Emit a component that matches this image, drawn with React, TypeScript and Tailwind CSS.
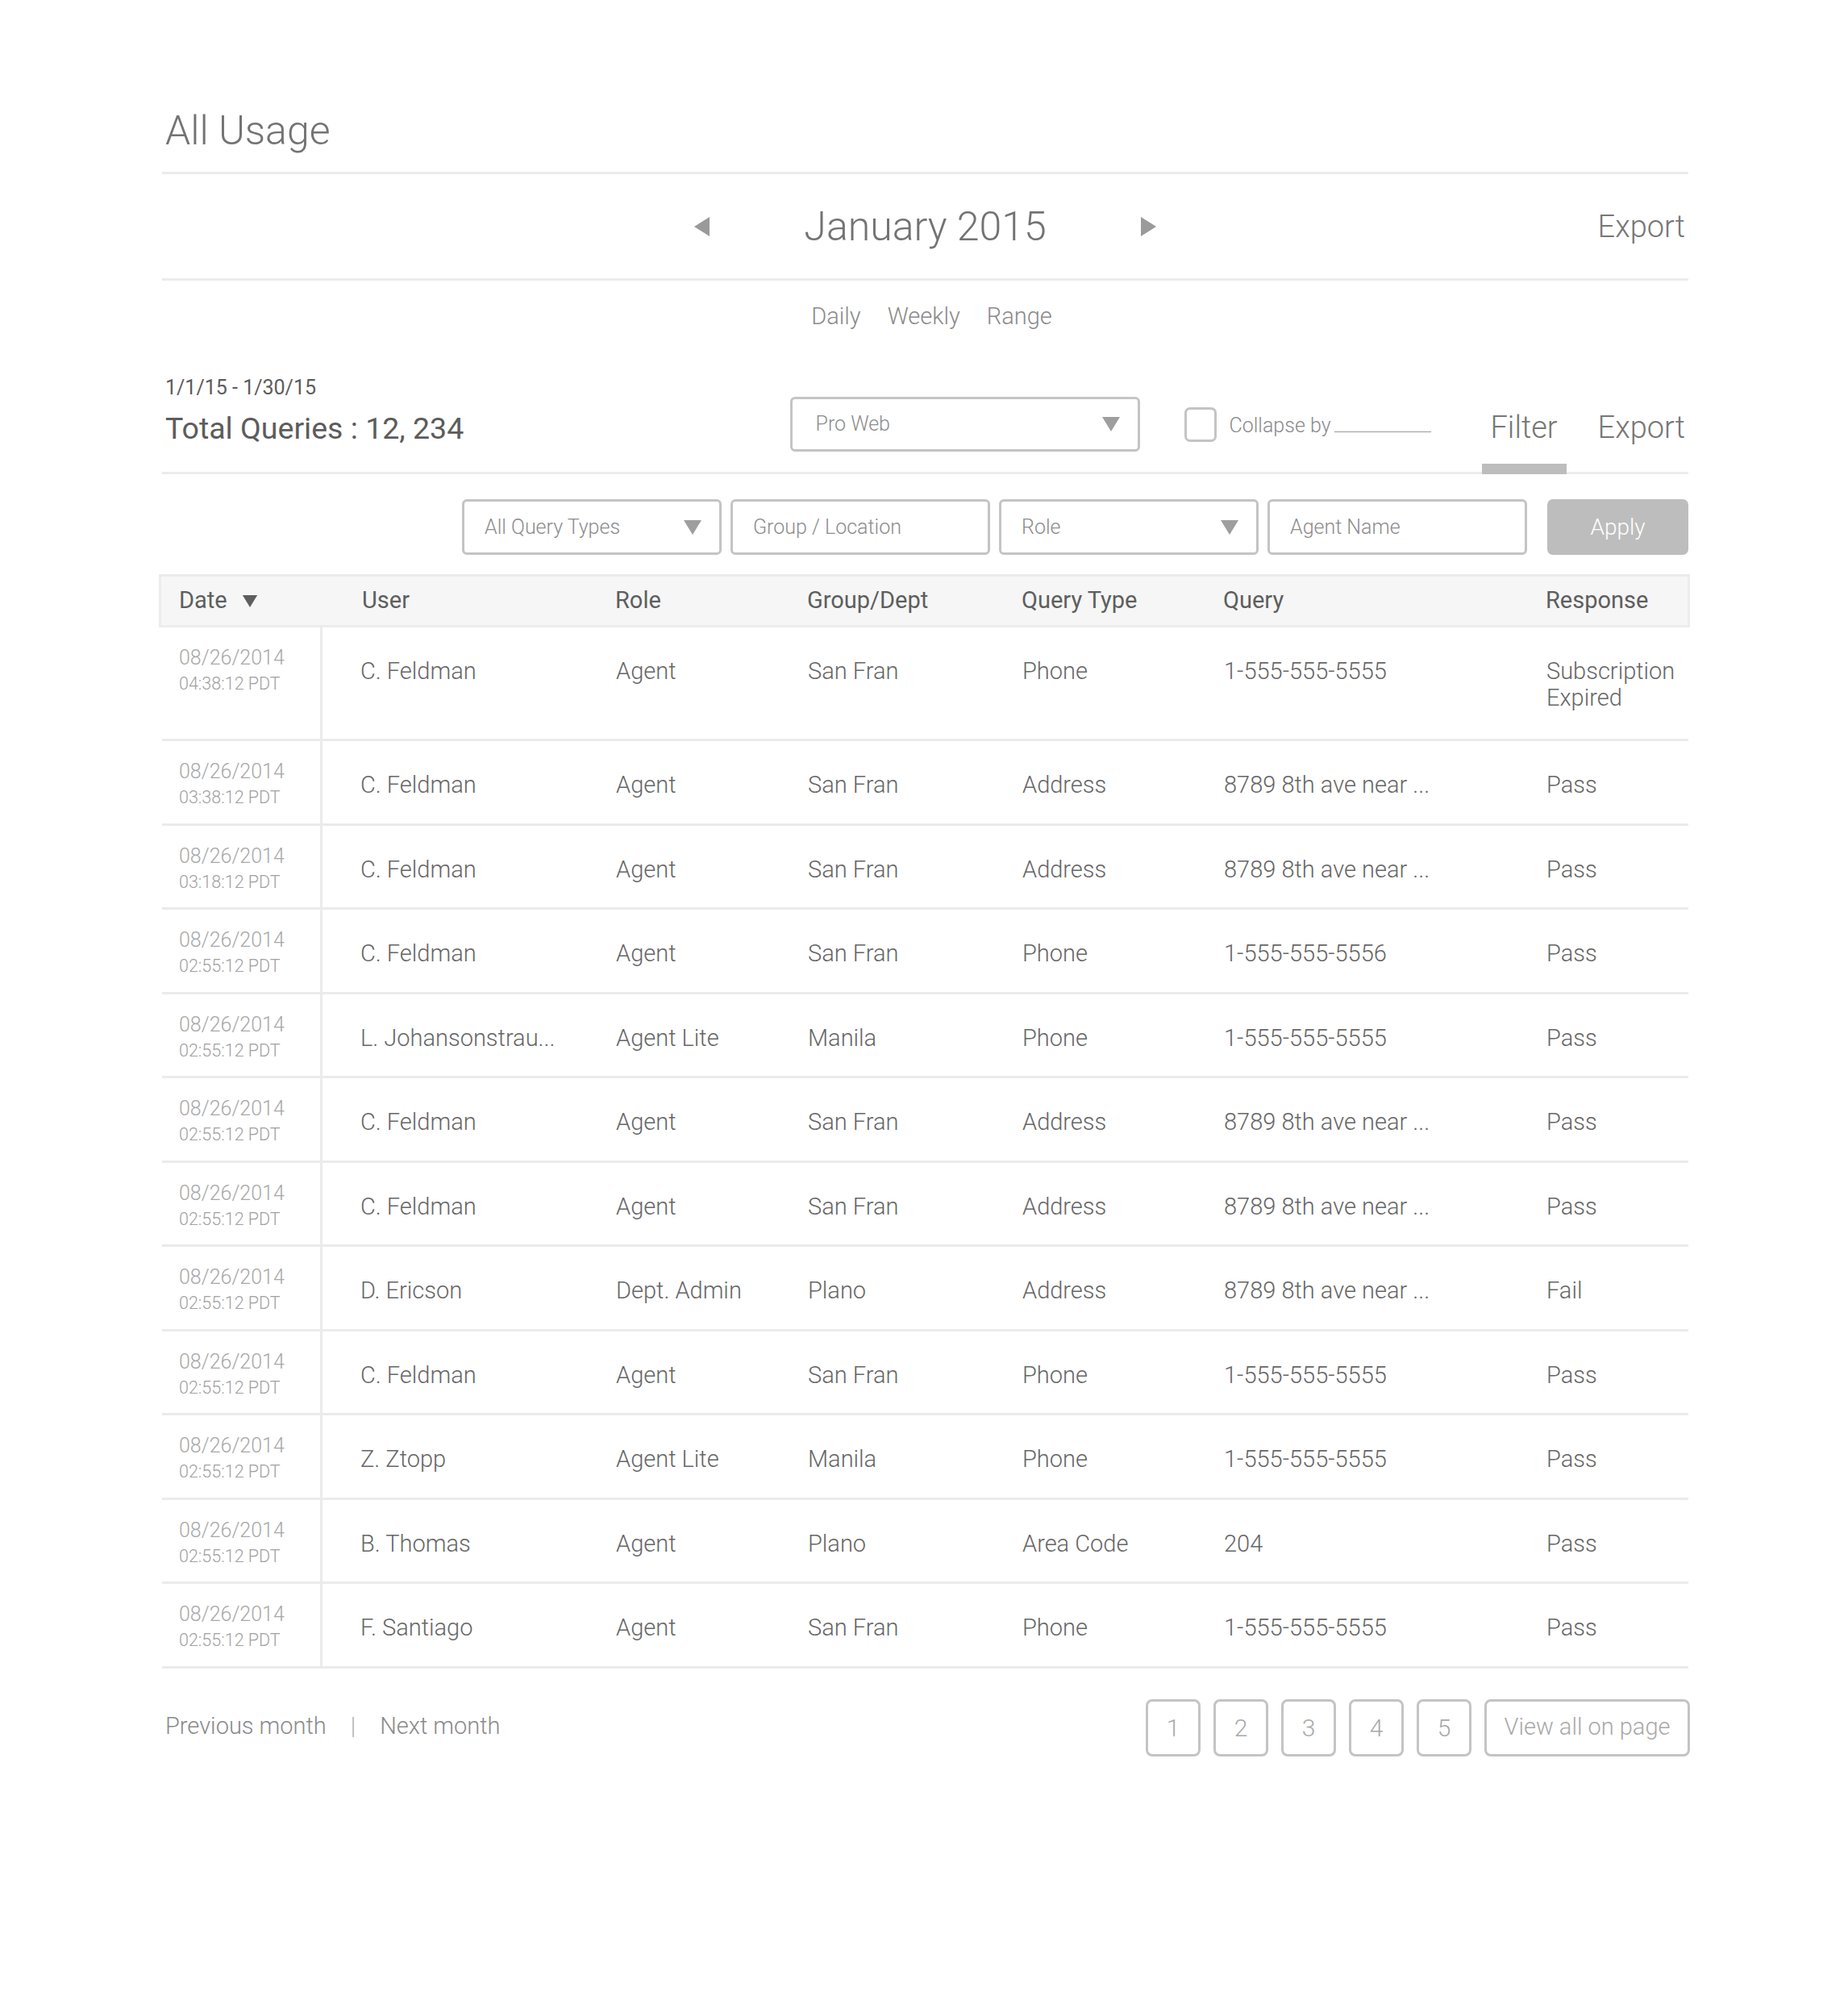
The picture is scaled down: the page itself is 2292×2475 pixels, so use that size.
import React from "react";

type Row = {
  date: string;
  time: string;
  user: string;
  role: string;
  group: string;
  type: string;
  query: string;
  response: string[];
};

const rows: Row[] = [
  { date: "08/26/2014", time: "04:38:12 PDT", user: "C. Feldman", role: "Agent", group: "San Fran", type: "Phone", query: "1-555-555-5555", response: ["Subscription", "Expired"] },
  { date: "08/26/2014", time: "03:38:12 PDT", user: "C. Feldman", role: "Agent", group: "San Fran", type: "Address", query: "8789 8th ave near ...", response: ["Pass"] },
  { date: "08/26/2014", time: "03:18:12 PDT", user: "C. Feldman", role: "Agent", group: "San Fran", type: "Address", query: "8789 8th ave near ...", response: ["Pass"] },
  { date: "08/26/2014", time: "02:55:12 PDT", user: "C. Feldman", role: "Agent", group: "San Fran", type: "Phone", query: "1-555-555-5556", response: ["Pass"] },
  { date: "08/26/2014", time: "02:55:12 PDT", user: "L. Johansonstrau...", role: "Agent Lite", group: "Manila", type: "Phone", query: "1-555-555-5555", response: ["Pass"] },
  { date: "08/26/2014", time: "02:55:12 PDT", user: "C. Feldman", role: "Agent", group: "San Fran", type: "Address", query: "8789 8th ave near ...", response: ["Pass"] },
  { date: "08/26/2014", time: "02:55:12 PDT", user: "C. Feldman", role: "Agent", group: "San Fran", type: "Address", query: "8789 8th ave near ...", response: ["Pass"] },
  { date: "08/26/2014", time: "02:55:12 PDT", user: "D. Ericson", role: "Dept. Admin", group: "Plano", type: "Address", query: "8789 8th ave near ...", response: ["Fail"] },
  { date: "08/26/2014", time: "02:55:12 PDT", user: "C. Feldman", role: "Agent", group: "San Fran", type: "Phone", query: "1-555-555-5555", response: ["Pass"] },
  { date: "08/26/2014", time: "02:55:12 PDT", user: "Z. Ztopp", role: "Agent Lite", group: "Manila", type: "Phone", query: "1-555-555-5555", response: ["Pass"] },
  { date: "08/26/2014", time: "02:55:12 PDT", user: "B. Thomas", role: "Agent", group: "Plano", type: "Area Code", query: "204", response: ["Pass"] },
  { date: "08/26/2014", time: "02:55:12 PDT", user: "F. Santiago", role: "Agent", group: "San Fran", type: "Phone", query: "1-555-555-5555", response: ["Pass"] },
];

// shared column grid for the table header and its rows
const cols = "grid grid-cols-[199px_364px_238px_266px_250px_400px_1fr]";

function Caret({ className = "", color = "#9e9e9e" }: { className?: string; color?: string }) {
  return (
    <svg width="22" height="18" viewBox="0 0 22 18" className={className}>
      <polygon points="0,0 22,0 11,18" fill={color} />
    </svg>
  );
}

function Arrow({ dir }: { dir: "left" | "right" }) {
  return (
    <svg width="19" height="24" viewBox="0 0 19 24">
      {dir === "left" ? <polygon points="19,0 19,24 0,12" fill="#9a9a9a" /> : <polygon points="0,0 0,24 19,12" fill="#9a9a9a" />}
    </svg>
  );
}

function Field({ label, caret }: { label: string; caret?: boolean }) {
  return (
    <div className="w-[322px] h-[69px] border-[3px] border-[#c4c4c4] rounded-[6px] flex items-center justify-between pl-[25px] pr-[22px]">
      <span className="text-[25px] font-light text-[#8c8c8c]">{label}</span>
      {caret && <Caret />}
    </div>
  );
}

export default function App() {
  return (
    <div className="min-h-[2475px] bg-white font-['Roboto',sans-serif]">
      <div className="w-[1893px] ml-[201px]">
        <div className="pt-[137px] pl-[4px] text-[50px] leading-[50px] font-light text-[#737373]">All Usage</div>
        <div className="mt-[26px] h-[3px] bg-[#ebebeb]" />

        <div className="h-[129px] grid grid-cols-[1fr_auto_1fr] items-center">
          <div />
          <div className="flex items-center gap-[117px]">
            <Arrow dir="left" />
            <span className="text-[50px] leading-none font-light text-[#737373]">January 2015</span>
            <Arrow dir="right" />
          </div>
          <span className="justify-self-end pr-[4px] text-[38px] leading-none font-light text-[#767676]">Export</span>
        </div>
        <div className="h-[3px] bg-[#ebebeb]" />

        <div className="h-[90px] pl-[16px] flex items-center justify-center gap-[33px] text-[29px] font-light text-[#8a8a8a]">
          <span>Daily</span>
          <span>Weekly</span>
          <span>Range</span>
        </div>

        <div className="h-[147px] flex items-end">
          <div className="pl-[4px] mb-[32px] text-[#5c5c5c]">
            <div className="text-[25px] leading-[28px]">1/1/15 - 1/30/15</div>
            <div className="mt-[14px] text-[37.5px] leading-[44px]">Total Queries : 12, 234</div>
          </div>

          <div className="ml-auto mb-[25px] flex items-center">
            <div className="w-[434px] h-[68px] border-[3px] border-[#c4c4c4] rounded-[6px] flex items-center justify-between pl-[28px] pr-[22px]">
              <span className="text-[25px] font-light text-[#8c8c8c]">Pro Web</span>
              <Caret />
            </div>
            <div className="ml-[55px] w-[40px] h-[43px] border-[3px] border-[#c4c4c4] rounded-[7px]" />
            <span className="ml-[15px] pt-[4px] text-[25px] font-light text-[#8a8a8a]">
              Collapse by
              <span className="inline-block align-baseline ml-[4px] w-[120px] h-[1px] bg-[#9a9a9a]" />
            </span>
          </div>

          <div className="ml-[63px] flex items-end">
            <div className="w-[105px] flex flex-col items-center">
              <span className="text-[38px] leading-[44px] font-light text-[#767676]">Filter</span>
              <div className="relative z-10 mt-[23px] mb-[-3px] h-[13px] w-full bg-[#bdbdbd]" />
            </div>
            <span className="ml-[39px] mb-[33px] pr-[4px] text-[38px] leading-[44px] font-light text-[#767676]">Export</span>
          </div>
        </div>
        <div className="h-[3px] bg-[#ebebeb]" />

        <div className="mt-[31px] flex justify-end gap-[11px]">
          <Field label="All Query Types" caret />
          <Field label="Group / Location" />
          <Field label="Role" caret />
          <Field label="Agent Name" />
          <button className="ml-[14px] w-[175px] h-[69px] rounded-[7px] bg-[#bdbdbd] text-white text-[28px] font-light">Apply</button>
        </div>

        <div className={`${cols} mt-[24px] -ml-[4px] w-[1899px] h-[66px] items-center bg-[#f5f6f5] border-[3px] border-[#ececec] text-[29px] text-[#5e5e5e]`}>
          <div className="pl-[22px] flex items-center gap-[18px]">
            Date
            <Caret color="#5e5e5e" className="w-[20px] h-[15px]" />
          </div>
          <div className="pl-[50px]">User</div>
          <div>Role</div>
          <div>Group/Dept</div>
          <div>Query Type</div>
          <div>Query</div>
          <div>Response</div>
        </div>

        {rows.map((r, i) => (
          <div key={i} className={`${cols} border-b-[3px] border-[#ebebeb] text-[29px] leading-[33px] font-light text-[#666]`}>
            <div className="pl-[21px] pt-[22px] border-r-[3px] border-[#ebebeb]">
              <div className="text-[25px] leading-[32px] text-[#a8a8a8]">{r.date}</div>
              <div className="text-[21.5px] leading-[32px] text-[#a0a0a0]">{r.time}</div>
            </div>
            <div className="pl-[47px] pt-[38px] pb-[30.5px]">{r.user}</div>
            <div className="pt-[38px]">{r.role}</div>
            <div className="pt-[38px]">{r.group}</div>
            <div className="pt-[38px]">{r.type}</div>
            <div className="pt-[38px]">{r.query}</div>
            <div className={r.response.length > 1 ? "pt-[38px] pb-[34px]" : "pt-[38px] pb-[30.5px]"}>
              {r.response.map((line) => (
                <div key={line}>{line}</div>
              ))}
            </div>
          </div>
        ))}

        <div className="mt-[38px] flex items-center">
          <div className="pl-[4px] pb-[3px] flex items-center text-[29px] font-light text-[#8a8a8a]">
            <span>Previous month</span>
            <span className="mx-[30px] text-[#b0b0b0]">|</span>
            <span>Next month</span>
          </div>
          <div className="ml-auto -mr-[2px] flex gap-[16px]">
            {["1", "2", "3", "4", "5"].map((n) => (
              <div key={n} className="w-[68px] h-[71px] border-[3px] border-[#c4c4c4] rounded-[8px] flex items-center justify-center text-[30px] font-light text-[#a9a9a9]">
                {n}
              </div>
            ))}
            <div className="w-[255px] h-[71px] border-[3px] border-[#c4c4c4] rounded-[8px] flex items-center justify-center text-[29px] font-light text-[#a9a9a9]">
              View all on page
            </div>
          </div>
        </div>
      </div>
    </div>
  );
}
